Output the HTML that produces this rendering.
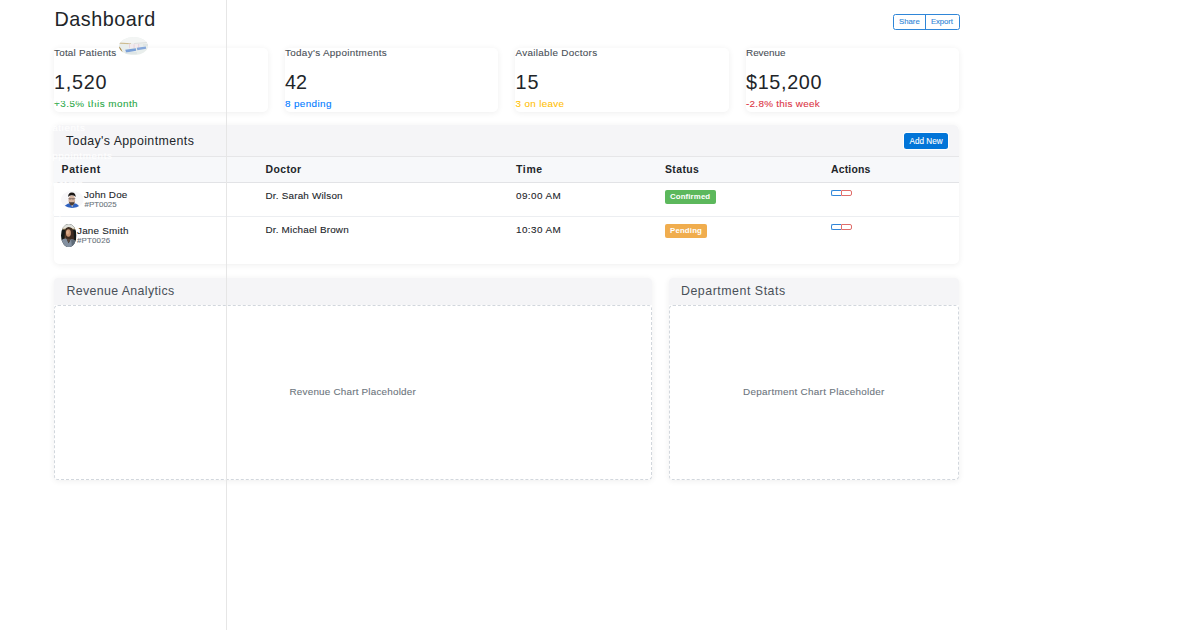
<!DOCTYPE html>
<html><head><meta charset="utf-8">
<style>
html,body{margin:0;padding:0;background:#fff;}
body{width:1200px;height:630px;overflow:hidden;position:relative;font-family:"Liberation Sans", sans-serif;color:#212529;}
.t{position:absolute;white-space:nowrap;line-height:1;}
.sm{-webkit-text-stroke:0.1px currentColor;}
.sb{position:absolute;left:0;top:0;width:226px;height:630px;border-right:1px solid #e6e6e6;z-index:5;}
.sb .t{color:#fff;font-size:9.89px;letter-spacing:0.6px;}
.card{position:absolute;background:#fff;border-radius:5px;box-shadow:0 1px 6px rgba(0,0,0,0.07);}
.hdr{position:absolute;left:0;top:0;right:0;background:#f5f5f7;border-radius:5px 5px 0 0;}
</style></head>
<body>
<div style="position:absolute;left:893px;top:14px;width:66.5px;height:16px;border-radius:2.5px;border:1px solid #2f86d8;box-sizing:border-box;"></div>
<div style="position:absolute;left:925px;top:14px;width:1px;height:16px;background:#2f86d8;"></div>

<div class="card" style="left:53.8px;top:47.5px;width:213.8px;height:64.5px;"></div>
<div class="card" style="left:284.5px;top:47.5px;width:213.8px;height:64.5px;"></div>
<div class="card" style="left:515.2px;top:47.5px;width:213.6px;height:64.5px;"></div>
<div class="card" style="left:745.8px;top:47.5px;width:213px;height:64.5px;"></div>

<div class="card" style="left:53.8px;top:125px;width:905px;height:139px;overflow:hidden;">
  <div class="hdr" style="height:32px;border-bottom:1px solid #e6e6e8;box-sizing:border-box;"></div>
  <div style="position:absolute;left:0;right:0;top:32px;height:26px;background:#f7f8fa;border-bottom:1px solid #e2e3e6;box-sizing:border-box;"></div>
  <div style="position:absolute;left:0;right:0;top:91px;height:1px;background:#eceef1;"></div>
</div>
<div style="position:absolute;left:904px;top:133px;width:44px;height:16px;background:#0275d8;border-radius:2.5px;box-shadow:0 0 0 1px #fff;"></div>

<div style="position:absolute;left:665px;top:190px;width:51px;height:14px;background:#5cb85c;border-radius:2px;"></div>
<div style="position:absolute;left:831px;top:190px;width:10px;height:6px;border:1px solid #2f86d8;border-right:none;border-radius:2px 0 0 2px;box-sizing:border-box;"></div>
<div style="position:absolute;left:841px;top:190px;width:11px;height:6px;border:1px solid #e06d69;border-radius:0 2px 2px 0;box-sizing:border-box;"></div>
<div style="position:absolute;left:665px;top:224px;width:42px;height:14px;background:#f0ad4e;border-radius:2px;"></div>
<div style="position:absolute;left:831px;top:224px;width:10px;height:6px;border:1px solid #2f86d8;border-right:none;border-radius:2px 0 0 2px;box-sizing:border-box;"></div>
<div style="position:absolute;left:841px;top:224px;width:11px;height:6px;border:1px solid #e06d69;border-radius:0 2px 2px 0;box-sizing:border-box;"></div>

<div class="card" style="left:53.8px;top:277.5px;width:598.6px;height:202px;border-radius:4px;">
  <div class="hdr" style="height:27.5px;border-radius:4px 4px 0 0;"></div>
  <div style="position:absolute;left:0;right:0;top:27.5px;bottom:0;border:1px dashed #d2d7dd;border-radius:4px;"></div>
</div>
<div class="card" style="left:669.2px;top:277.5px;width:289.8px;height:202px;border-radius:4px;">
  <div class="hdr" style="height:27.5px;border-radius:4px 4px 0 0;"></div>
  <div style="position:absolute;left:0;right:0;top:27.5px;bottom:0;border:1px dashed #d2d7dd;border-radius:4px;"></div>
</div>

<svg style="position:absolute;left:61px;top:190.5px;" width="22.5" height="17" viewBox="0 0 225 170">
<defs><clipPath id="cj"><ellipse cx="112.5" cy="85" rx="112.5" ry="85"/></clipPath></defs>
<ellipse cx="112.5" cy="85" rx="112.5" ry="85" fill="#f7f7f9"/>
<g clip-path="url(#cj)">
<path d="M22,168 Q50,128 85,122 L135,122 Q172,130 192,168 L150,172 L60,172 Z" fill="#2f62c0"/>
<path d="M95,122 L112,165 L128,122 Z" fill="#dcd6d2"/>
<ellipse cx="108" cy="92" rx="33" ry="48" fill="#d6b4a0"/>
<path d="M72,60 Q70,18 108,16 Q148,18 146,60 Q138,42 108,42 Q80,42 72,60 Z" fill="#1a1614"/>
<path d="M80,104 Q84,142 108,144 Q132,142 136,104 Q124,116 108,112 Q92,116 80,104 Z" fill="#4a3c36"/>
<rect x="74" y="76" width="70" height="4" fill="#4a4040"/>
<rect x="80" y="80" width="22" height="8" fill="none" stroke="#5a5050" stroke-width="3"/>
<rect x="114" y="80" width="22" height="8" fill="none" stroke="#5a5050" stroke-width="3"/>
</g></svg>
<div class="t" id="title" style="left:54.5px;top:9.54px;font-size:19.79px;color:#212529;letter-spacing:0.500px;">Dashboard</div>
<div class="t sm" id="share" style="left:899px;top:17.52px;font-size:7.77px;color:#2f86d8;">Share</div>
<div class="t sm" id="export" style="left:931px;top:17.52px;font-size:7.77px;color:#2f86d8;letter-spacing:-0.100px;">Export</div>
<div class="t sm" id="s1l" style="left:54px;top:48.41px;font-size:9.89px;color:#495057;letter-spacing:0.231px;">Total Patients</div>
<div class="t" id="s1v" style="left:54px;top:72.54px;font-size:19.79px;color:#212529;letter-spacing:0.750px;">1,520</div>
<div class="t sm" id="s1s" style="left:54px;top:99.12px;font-size:9.89px;color:#28a745;letter-spacing:0.467px;">+3.5% this month</div>
<div class="t sm" id="s2l" style="left:285px;top:48.41px;font-size:9.89px;color:#495057;letter-spacing:0.316px;">Today's Appointments</div>
<div class="t" id="s2v" style="left:285px;top:72.54px;font-size:19.79px;color:#212529;">42</div>
<div class="t sm" id="s2s" style="left:285px;top:99.12px;font-size:9.89px;color:#007bff;letter-spacing:0.375px;">8 pending</div>
<div class="t sm" id="s3l" style="left:515.5px;top:48.41px;font-size:9.89px;color:#495057;letter-spacing:0.312px;">Available Doctors</div>
<div class="t" id="s3v" style="left:515.5px;top:72.54px;font-size:19.79px;color:#212529;letter-spacing:1.000px;">15</div>
<div class="t sm" id="s3s" style="left:515.5px;top:99.12px;font-size:9.89px;color:#ffc107;letter-spacing:0.333px;">3 on leave</div>
<div class="t sm" id="s4l" style="left:746px;top:48.41px;font-size:9.89px;color:#495057;">Revenue</div>
<div class="t" id="s4v" style="left:746px;top:72.54px;font-size:19.79px;color:#212529;letter-spacing:0.667px;">$15,200</div>
<div class="t sm" id="s4s" style="left:746px;top:99.12px;font-size:9.89px;color:#dc3545;letter-spacing:0.286px;">-2.8% this week</div>
<div class="t" id="apt" style="left:66px;top:135.40px;font-size:12.37px;color:#212529;letter-spacing:0.421px;">Today's Appointments</div>
<div class="t sm" id="addnew" style="left:909.5px;top:138.09px;font-size:8.16px;color:#ffffff;">Add New</div>
<div class="t" id="h1" style="left:61.5px;top:165.15px;font-size:10.45px;color:#212529;font-weight:700;letter-spacing:0.667px;">Patient</div>
<div class="t" id="h2" style="left:265.5px;top:165.15px;font-size:10.45px;color:#212529;font-weight:700;letter-spacing:0.400px;">Doctor</div>
<div class="t" id="h3" style="left:516px;top:165.15px;font-size:10.45px;color:#212529;font-weight:700;letter-spacing:0.667px;">Time</div>
<div class="t" id="h4" style="left:665px;top:165.15px;font-size:10.45px;color:#212529;font-weight:700;letter-spacing:0.400px;">Status</div>
<div class="t" id="h5" style="left:831px;top:165.15px;font-size:10.45px;color:#212529;font-weight:700;letter-spacing:0.167px;">Actions</div>
<div class="t sm" id="r1n" style="left:84px;top:189.52px;font-size:9.89px;color:#212529;letter-spacing:0.143px;">John Doe</div>
<div class="t sm" id="r1i" style="left:84.5px;top:201.02px;font-size:7.92px;color:#6c757d;">#PT0025</div>
<div class="t sm" id="r1d" style="left:265.5px;top:190.86px;font-size:9.89px;color:#212529;letter-spacing:0.200px;">Dr. Sarah Wilson</div>
<div class="t sm" id="r1t" style="left:516px;top:190.86px;font-size:9.89px;color:#212529;letter-spacing:0.429px;">09:00 AM</div>
<div class="t" id="r1b" style="left:670px;top:192.59px;font-size:7.84px;color:#ffffff;font-weight:700;letter-spacing:0.125px;">Confirmed</div>
<div class="t sm" id="r2n" style="left:77px;top:225.62px;font-size:9.89px;color:#212529;letter-spacing:0.222px;">Jane Smith</div>
<div class="t sm" id="r2i" style="left:77px;top:237.22px;font-size:7.92px;color:#6c757d;letter-spacing:0.167px;">#PT0026</div>
<div class="t sm" id="r2d" style="left:265.5px;top:224.86px;font-size:9.89px;color:#212529;letter-spacing:0.188px;">Dr. Michael Brown</div>
<div class="t sm" id="r2t" style="left:516px;top:224.86px;font-size:9.89px;color:#212529;letter-spacing:0.429px;">10:30 AM</div>
<div class="t" id="r2b" style="left:670px;top:226.69px;font-size:7.84px;color:#ffffff;font-weight:700;letter-spacing:0.167px;">Pending</div>
<div class="t" id="rev" style="left:66.5px;top:284.90px;font-size:12.37px;color:#495057;letter-spacing:0.375px;">Revenue Analytics</div>
<div class="t sm" id="revp" style="left:289.5px;top:386.52px;font-size:9.89px;color:#6c757d;letter-spacing:0.208px;">Revenue Chart Placeholder</div>
<div class="t" id="dep" style="left:681px;top:284.90px;font-size:12.37px;color:#495057;letter-spacing:0.533px;">Department Stats</div>
<div class="t sm" id="depp" style="left:743px;top:386.52px;font-size:9.89px;color:#6c757d;letter-spacing:0.296px;">Department Chart Placeholder</div>
<svg style="position:absolute;left:61px;top:224px;" width="15.5" height="23" viewBox="0 0 155 230">
<defs><clipPath id="cn"><ellipse cx="77.5" cy="115" rx="77.5" ry="115"/></clipPath>
<linearGradient id="gsky" x1="0" y1="0" x2="0" y2="1"><stop offset="0" stop-color="#d5dad8"/><stop offset="0.7" stop-color="#e6e4da"/><stop offset="1" stop-color="#b9a47a"/></linearGradient></defs>
<g clip-path="url(#cn)">
<rect x="0" y="0" width="155" height="230" fill="#141a18"/>
<rect x="0" y="0" width="155" height="55" fill="url(#gsky)"/>
<path d="M38,80 Q40,32 76,30 Q118,32 126,80 L134,180 Q110,168 84,172 Q56,168 34,178 Z" fill="#3e2c20"/>
<path d="M40,90 Q44,140 60,175 L36,178 Z" fill="#6a4a30"/>
<ellipse cx="74" cy="90" rx="25" ry="38" fill="#c99573"/>
<ellipse cx="66" cy="82" rx="12" ry="20" fill="#dcae8c"/>
<path d="M0,230 L0,165 Q28,140 56,148 L76,192 L98,150 Q126,150 155,178 L155,230 Z" fill="#8390a0"/>
<path d="M100,150 Q126,150 155,178 L155,230 L110,230 Z" fill="#5f6b78"/>
<path d="M56,148 L76,192 L98,150 Z" fill="#5a4a40"/>
</g></svg>
<svg style="position:absolute;left:118.8px;top:37.1px;" width="29.2" height="18.1" viewBox="0 0 292 181">
<defs><clipPath id="ch"><ellipse cx="146" cy="90.5" rx="146" ry="90.5"/></clipPath></defs>
<g clip-path="url(#ch)">
<rect x="0" y="0" width="292" height="181" fill="#e9eeec"/>
<rect x="0" y="0" width="292" height="65" fill="#f3f5f4"/>
<path d="M0,55 L120,62 L122,72 L0,68 Z" fill="#cdbb90"/>
<path d="M150,60 L292,52 L292,60 L150,68 Z" fill="#d5d9d6"/>
<rect x="95" y="68" width="115" height="42" fill="#f1ebee"/>
<rect x="100" y="70" width="5" height="42" fill="#dcbcc9"/>
<rect x="148" y="74" width="5" height="38" fill="#dcbcc9"/>
<rect x="196" y="70" width="5" height="42" fill="#dcbcc9"/>
<path d="M0,95 Q25,110 45,181 L0,181 Z" fill="#ad8f52"/>
<path d="M62,128 L168,112 L172,138 L72,156 Z" fill="#7aa0d8"/>
<path d="M178,108 L268,96 L272,118 L184,132 Z" fill="#86a8da"/>
<rect x="60" y="156" width="120" height="8" fill="#cfd8dd"/>
<rect x="240" y="70" width="52" height="20" fill="#e0e6e4"/>
</g></svg>

<div class="sb">
  <div class="t" style="left:45px;top:95px;">Dashboard</div>
  <div class="t" style="left:45px;top:123px;">Patients</div>
  <div class="t" style="left:45px;top:151px;">Appointments</div>
  <div class="t" style="left:45px;top:179px;">Doctors</div>
  <div class="t" style="left:45px;top:207px;">Reports</div>
</div>
</body></html>
